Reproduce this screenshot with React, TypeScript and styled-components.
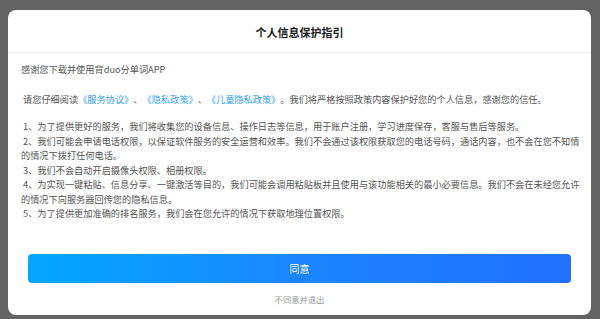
import styled, { createGlobalStyle } from "styled-components";

const GlobalStyle = createGlobalStyle`
  html, body {
    margin: 0;
    padding: 0;
    background: #636363;
  }
  body {
    font-family: "Noto Sans CJK SC", "Noto Sans", sans-serif;
    text-spacing-trim: space-all;
  }
`;

const items = [
    "1、为了提供更好的服务，我们将收集您的设备信息、操作日志等信息，用于账户注册，学习进度保存，客服与售后等服务。",
    "2、我们可能会申请电话权限，以保证软件服务的安全运营和效率。我们不会通过该权限获取您的电话号码，通话内容，也不会在您不知情的情况下拨打任何电话。",
    "3、我们不会自动开启摄像头权限、相册权限。",
    "4、为实现一键粘贴、信息分享、一键激活等目的，我们可能会调用粘贴板并且使用与该功能相关的最小必要信息。我们不会在未经您允许的情况下向服务器回传您的隐私信息。",
    "5、为了提供更加准确的排名服务，我们会在您允许的情况下获取地理位置权限。",
];

export default function App() {
    return (
        <>
            <GlobalStyle />
            <Page>
                <Modal>
                    <Header>
                        <Title>个人信息保护指引</Title>
                    </Header>
                    <Content>
                        <Intro>感谢您下载并使用背duo分单词APP</Intro>
                        <Lead>
                            {" "}请您仔细阅读<Link>《服务协议》</Link>、<Link>《隐私政策》</Link>、<Link>《儿童隐私政策》</Link>。我们将严格按照政策内容保护好您的个人信息，感谢您的信任。
                        </Lead>
                        <List>
                            {items.map((t) => (
                                <Item key={t}>{" "}{t}</Item>
                            ))}
                        </List>
                    </Content>
                    <Footer>
                        <AgreeButton>同意</AgreeButton>
                        <Decline>不同意并退出</Decline>
                    </Footer>
                </Modal>
            </Page>
        </>
    );
}

const Page = styled.div`
    width: 600px;
    height: 319px;
    padding: 10px 9px 0 8px;
    box-sizing: border-box;
`
const Modal = styled.div`
    width: 583px;
    height: 305px;
    background: #fff;
    border-radius: 8px;
    display: flex;
    flex-direction: column;
    overflow: hidden;
`
const Header = styled.div`
    height: 42px;
    border-bottom: 1px solid #f1f1f1;
    display: flex;
    align-items: center;
    justify-content: center;
    flex-shrink: 0;
`
const Title = styled.h1`
    margin: 0;
    font-size: 11px;
    font-weight: 700;
    color: #1b1b1b;
    padding-top: 1px;
`
const Content = styled.div`
    padding: 9px 10px 0 13px;
    font-size: 9.2px;
    line-height: 14.5px;
    color: #555;
    flex: 1;
`
const Intro = styled.p`
    margin: 0 0 15.5px;
`
const Lead = styled.p`
    margin: 0 0 12.5px;
    white-space: pre-wrap;
`
const Link = styled.span`
    color: #35a3f2;
`
const List = styled.div`
    display: flex;
    flex-direction: column;
`
const Item = styled.p`
    margin: 0;
    white-space: pre-wrap;
`
const Footer = styled.div`
    display: flex;
    flex-direction: column;
    align-items: center;
    padding: 0 20px 9px;
`
const AgreeButton = styled.button`
    width: 100%;
    height: 29px;
    border: none;
    border-radius: 4px;
    background: linear-gradient(90deg, #03a8ff 0%, #1a85ff 50%, #2270ff 100%);
    color: #fff;
    font-family: inherit;
    font-size: 10px;
    cursor: pointer;
    padding: 0;
`
const Decline = styled.span`
    margin-top: 9px;
    font-size: 8.3px;
    line-height: 14px;
    color: #9a9a9a;
`
